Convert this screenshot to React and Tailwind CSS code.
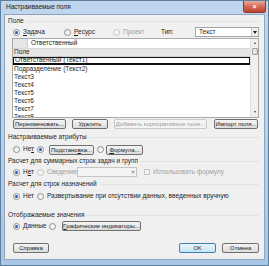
import { useState } from 'react'

const font = { fontFamily: '"Liberation Sans", "Noto Sans", sans-serif' }

const Radio = ({ checked, disabled }) => (
  <span
    className={`inline-flex items-center justify-center w-[7px] h-[7px] rounded-full border shrink-0 ${
      disabled ? 'border-[#c4c4c4] bg-[#f4f4f4]' : 'border-[#8e8f8f] bg-gradient-to-br from-[#e6e6e6] to-[#ffffff]'
    }`}
  >
    {checked && <span className="w-[3px] h-[3px] rounded-full bg-[#2a5ab8]" />}
  </span>
)

const Btn = ({ children, w, disabled, primary }) => (
  <div
    className={`h-[10px] flex items-center justify-center rounded-[2px] border text-[6px] leading-none whitespace-nowrap overflow-hidden shrink-0 ${w} ${
      disabled
        ? 'border-[#c8c8c8] bg-[#f4f4f4] text-[#9a9a9a]'
        : primary
          ? 'border-[#3c7fb1] bg-gradient-to-b from-[#eaf6fd] to-[#c6e4f6] text-[#1e1e1e]'
          : 'border-[#707070] bg-gradient-to-b from-[#f4f4f4] to-[#dcdcdc] text-[#1e1e1e]'
    }`}
  >
    {children}
  </div>
)

const Section = ({ children, mt }) => (
  <div className={`h-[8px] flex items-center gap-[3px] pl-[3px] pr-[5px] ${mt}`}>
    <span className="text-[6.5px] leading-none text-[#1e1e1e] whitespace-nowrap">{children}</span>
    <span className="flex-1 h-px bg-[#e2e2e2]" />
  </div>
)

const Opt = ({ checked, disabled, children, className = '' }) => (
  <div className={`flex items-center gap-[3px] shrink-0 ${className}`}>
    <Radio checked={checked} disabled={disabled} />
    {children && (
      <span className={`text-[6.5px] leading-none whitespace-nowrap ${disabled ? 'text-[#a0a0a0]' : 'text-[#1e1e1e]'}`}>
        {children}
      </span>
    )}
  </div>
)

export default function App() {
  const [sel, setSel] = useState(0)
  const rows = [
    'Ответственный (Текст1)',
    'Подразделение (Текст2)',
    'Текст3',
    'Текст4',
    'Текст5',
    'Текст6',
    'Текст7',
    'Текст8',
  ]
  return (
    <div
      style={font}
      className="w-[269px] h-[266px] flex flex-col bg-gradient-to-b from-[#c0d6ee] via-[#b8d0ea] to-[#a9c6e6] border border-[#5f7f9f] overflow-hidden"
    >
      {/* title bar */}
      <div className="h-[13px] flex items-center justify-between shrink-0">
        <span className="pl-[5px] text-[6.5px] leading-none text-[#1a1a1a]">Настраиваемые поля</span>
        <div className="w-[23px] h-[12px] self-start rounded-b-[3px] border border-t-0 border-[#8c3a2e] bg-gradient-to-b from-[#e9a99c] via-[#d46a55] to-[#c0402a] flex items-center justify-center mr-[2px]">
          <span className="text-white text-[7px] leading-none font-bold">×</span>
        </div>
      </div>

      {/* client area */}
      <div className="flex-1 mx-[3px] mb-[5px] bg-[#f0f0f0] border border-[#8ea5bf] flex flex-col">
        <Section mt="mt-[2px]">Поле</Section>

        <div className="h-[10px] mt-[2px] flex items-center pl-[8px] pr-[5px]">
          <Opt checked className="w-[51px]">
            <span className="underline">З</span>адача
          </Opt>
          <Opt className="w-[49px]">
            <span className="underline">Р</span>есурс
          </Opt>
          <Opt disabled className="w-[48px]">
            Проект
          </Opt>
          <span className="text-[6.5px] leading-none text-[#1e1e1e] w-[34px]">Тип:</span>
          <div className="flex-1 h-[10px] bg-white border border-[#a4a4a4] flex items-center">
            <span className="flex-1 pl-[3px] text-[6.5px] leading-none text-[#1e1e1e]">Текст</span>
            <div className="w-[7px] h-full border-l border-[#cfcfcf] bg-[#f0f0f0] flex items-center justify-center">
              <span className="w-0 h-0 border-l-[2px] border-r-[2px] border-t-[3px] border-l-transparent border-r-transparent border-t-[#202020]" />
            </div>
          </div>
        </div>

        {/* grid */}
        <div className="h-[80px] mt-[1px] ml-[7px] mr-[5px] border border-[#a9a9a9] bg-white flex">
          <div className="flex-1 flex flex-col overflow-hidden">
            <div className="h-[10px] flex border-b border-[#d8d8d8] shrink-0">
              <div className="w-[15px] bg-[#e6e6e6] border-r border-[#d0d0d0]" />
              <span className="pl-[3px] self-center text-[6.5px] leading-none text-[#1e1e1e]">Ответственный</span>
            </div>
            <div className="h-[8px] bg-[#e6e6e6] border-b border-[#cfcfcf] flex items-center pl-[1px] shrink-0">
              <span className="text-[6.5px] leading-none text-[#1e1e1e]">Поле</span>
            </div>
            {rows.map((r, i) => (
              <div
                key={`row-${i}`}
                onClick={() => setSel(i)}
                className={`h-[8px] flex items-center pl-[1px] shrink-0 ${
                  sel === i ? 'border-t border-b-2 border-x border-[#101010]' : ''
                }`}
              >
                <span className="text-[6.5px] leading-none text-[#1e1e1e] whitespace-nowrap">{r}</span>
              </div>
            ))}
          </div>
          <div className="w-[8px] bg-[#f0f0f0] border-l border-[#e0e0e0] flex flex-col items-center">
            <span className="mt-[3px] w-0 h-0 border-l-[1.5px] border-r-[1.5px] border-b-[2px] border-l-transparent border-r-transparent border-b-[#404040]" />
            <div className="mt-[4px] w-[6px] h-[7px] rounded-[1px] border border-[#9a9a9a] bg-gradient-to-r from-[#f2f2f2] to-[#d8d8d8]" />
            <div className="flex-1" />
            <span className="mb-[4px] w-0 h-0 border-l-[1.5px] border-r-[1.5px] border-t-[2px] border-l-transparent border-r-transparent border-t-[#404040]" />
          </div>
        </div>

        <div className="h-[10px] mt-[1px] flex items-center pl-[8px] pr-[5px]">
          <Btn w="w-[53px]">Переименовать...</Btn>
          <div className="w-[6px]" />
          <Btn w="w-[36px]">Удалить</Btn>
          <div className="w-[6px]" />
          <Btn w="w-[93px]" disabled>
            Добавить корпоративное поле...
          </Btn>
          <div className="w-[7px]" />
          <Btn w="w-[44px]">Импорт поля...</Btn>
        </div>

        <Section mt="mt-[4px]">Настраиваемые атрибуты</Section>
        <div className="h-[11px] mt-[3px] flex items-center pl-[8px]">
          <Opt className="w-[24px]">
            Не<span className="underline">т</span>
          </Opt>
          <Opt checked className="w-[12px]" />
          <Btn w="w-[45px]">
            Подстано<span className="underline">в</span>ка...
          </Btn>
          <div className="w-[12px] flex justify-center">
            <Radio />
          </div>
          <Btn w="w-[37px]">
            <span className="underline">Ф</span>ормула...
          </Btn>
        </div>

        <Section mt="mt-[2px]">Расчет для суммарных строк задач и групп</Section>
        <div className="h-[10px] mt-[2px] flex items-center pl-[8px]">
          <Opt checked className="w-[24px]">
            Н<span className="underline">е</span>т
          </Opt>
          <Opt disabled className="w-[40px]">
            Сведение:
          </Opt>
          <div className="w-[60px] h-[10px] bg-[#f4f4f4] border border-[#c4c4c4] flex justify-end">
            <div className="w-[7px] flex items-center justify-center">
              <span className="w-0 h-0 border-l-[2px] border-r-[2px] border-t-[3px] border-l-transparent border-r-transparent border-t-[#a8a8a8]" />
            </div>
          </div>
          <div className="ml-[7px] flex items-center gap-[3px]">
            <span className="w-[6px] h-[6px] border border-[#c4c4c4] bg-[#f4f4f4]" />
            <span className="text-[6.5px] leading-none text-[#a0a0a0] whitespace-nowrap">Использовать формулу</span>
          </div>
        </div>

        <Section mt="mt-[3px]">Расчет для строк назначений</Section>
        <div className="h-[10px] mt-[3px] flex items-center pl-[8px]">
          <Opt checked className="w-[24px]">
            Нет
          </Opt>
          <Opt>Развертывание при отсутствии данных, введенных вручную</Opt>
        </div>

        <Section mt="mt-[10px]">Отображаемые значения</Section>
        <div className="h-[10px] mt-[2px] flex items-center pl-[8px]">
          <Opt checked className="w-[36px]">
            <span className="underline">Д</span>анные
          </Opt>
          <Opt className="w-[13px]" />
          <Btn w="w-[79px]">
            <span className="underline">Г</span>рафические индикаторы...
          </Btn>
        </div>

        <div className="flex-1" />
        <div className="h-[10px] mb-[6px] flex items-center pl-[8px] pr-[5px]">
          <Btn w="w-[36px]">Справка</Btn>
          <div className="flex-1" />
          <Btn w="w-[37px]" primary>
            OK
          </Btn>
          <div className="w-[6px]" />
          <Btn w="w-[37px]">Отмена</Btn>
        </div>
      </div>
    </div>
  )
}
